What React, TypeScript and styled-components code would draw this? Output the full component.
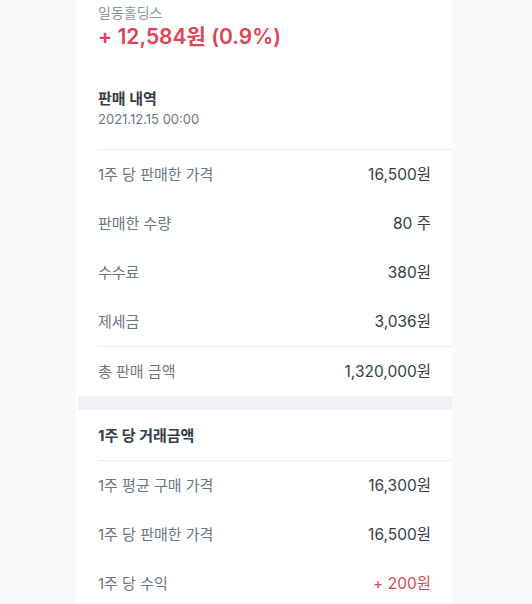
import React from 'react';
import styled, { createGlobalStyle } from 'styled-components';

const GlobalStyle = createGlobalStyle`
    body {
        margin: 0;
        background: #f9f9fa;
        font-family: Inter, "Noto Sans CJK KR", sans-serif;
        -webkit-font-smoothing: antialiased;
    }
`;

const Page = styled.div`
    width: 376px;
    margin-left: 76px;
    background: #fff;
    min-height: 604px;
`;

const Summary = styled.div`
    padding: 3px 22px 0;
`;

const StockName = styled.div`
    font-size: 14px;
    line-height: 20px;
    color: #8b95a1;
`;

const Profit = styled.div<{ $up?: boolean }>`
    font-size: 21px;
    font-weight: 600;
    line-height: 28px;
    color: ${(p) => (p.$up ? '#df4452' : '#3182f6')};
`;

const Header = styled.div`
    padding: 37px 0 0 22px;
    height: 98px;
    box-sizing: border-box;
`;

const Title = styled.div`
    font-size: 15px;
    font-weight: 700;
    color: #333d4b;
    line-height: 22px;
`;

const DateText = styled.div`
    font-size: 13px;
    color: #6b7684;
    line-height: 19px;
`;

const SectionTitle = styled.div`
    height: 50px;
    display: flex;
    align-items: center;
    padding: 0 0 2px 22px;
    box-sizing: border-box;
    font-size: 15px;
    font-weight: 700;
    color: #333d4b;
`;

const Divider = styled.div`
    height: 1px;
    margin-left: 22px;
    background: #ebecee;
`;

const Band = styled.div`
    height: 14px;
    margin-left: 2px;
    background: #f0f1f4;
`;

const Row = styled.div`
    height: 49px;
    display: flex;
    align-items: center;
    justify-content: space-between;
    padding: 0 21px 3px 22px;
    box-sizing: border-box;
`;

const Label = styled.span`
    font-size: 15px;
    color: #6b7684;
`;

const Value = styled.span<{ $accent?: boolean }>`
    font-size: 15.5px;
    color: ${(p) => (p.$accent ? '#df4452' : '#333d4b')};
`;

type Item = { label: string; value: string; accent?: boolean };

const sale: Item[] = [
    { label: '1주 당 판매한 가격', value: '16,500원' },
    { label: '판매한 수량', value: '80 주' },
    { label: '수수료', value: '380원' },
    { label: '제세금', value: '3,036원' },
];

const perShare: Item[] = [
    { label: '1주 평균 구매 가격', value: '16,300원' },
    { label: '1주 당 판매한 가격', value: '16,500원' },
    { label: '1주 당 수익', value: '+ 200원', accent: true },
];

const Rows = ({ items }: { items: Item[] }) => (
    <>
        {items.map((item) => (
            <Row key={item.label}>
                <Label>{item.label}</Label>
                <Value $accent={item.accent}>{item.value}</Value>
            </Row>
        ))}
    </>
);

const App: React.FC = () => {
    return <>
        <GlobalStyle />
        <Page>
            <Summary>
                <StockName>일동홀딩스</StockName>
                <Profit $up>+ 12,584원 (0.9%)</Profit>
            </Summary>
            <Header>
                <Title>판매 내역</Title>
                <DateText>2021.12.15 00:00</DateText>
            </Header>
            <Divider />
            <Rows items={sale} />
            <Divider />
            <Row>
                <Label>총 판매 금액</Label>
                <Value>1,320,000원</Value>
            </Row>
            <Band />
            <SectionTitle>1주 당 거래금액</SectionTitle>
            <Divider />
            <Rows items={perShare} />
        </Page>
    </>;
};

export default App;
